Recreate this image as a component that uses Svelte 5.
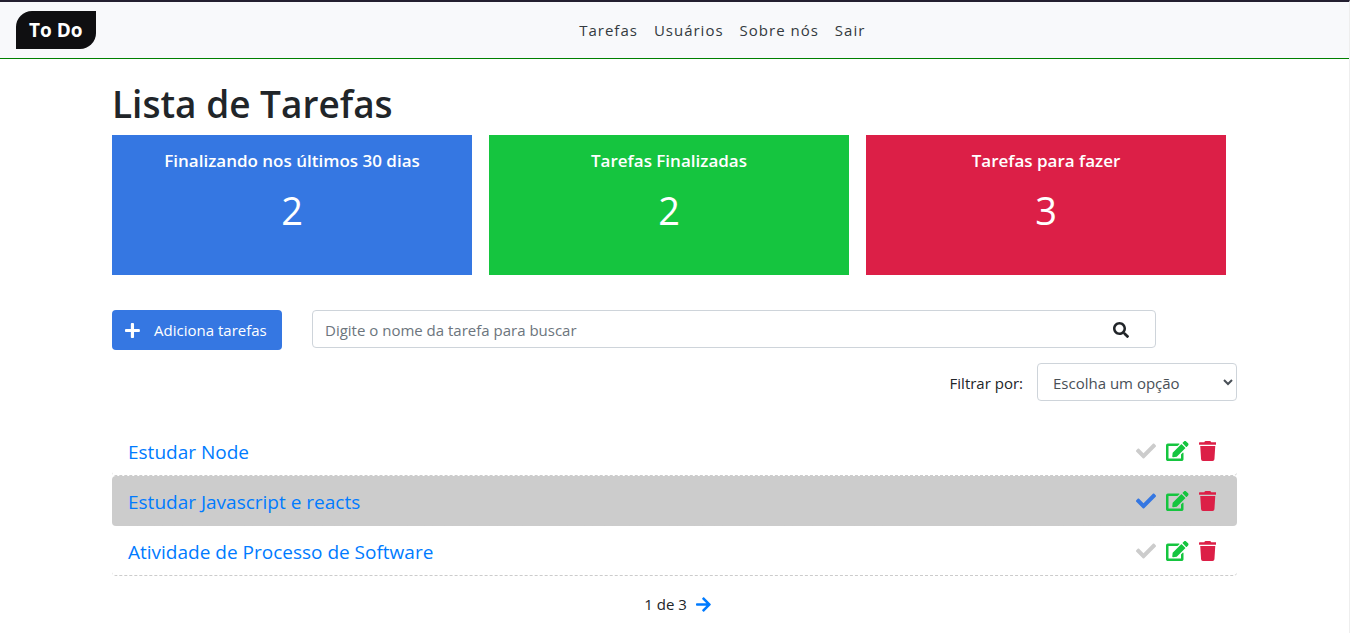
<script>
  const links = ['Tarefas', 'Usuários', 'Sobre nós', 'Sair'];

  const cards = [
    { title: 'Finalizando nos últimos 30 dias', total: 2, tone: 'blue' },
    { title: 'Tarefas Finalizadas', total: 2, tone: 'green' },
    { title: 'Tarefas para fazer', total: 3, tone: 'red' }
  ];

  let tasks = $state([
    { id: 1, title: 'Estudar Node', done: false },
    { id: 2, title: 'Estudar Javascript e reacts', done: true },
    { id: 3, title: 'Atividade de Processo de Software', done: false }
  ]);

  let search = $state('');
  let filter = $state('');

  const icons = {
    plus: { w: 448, d: 'M416 208H272V64c0-17.67-14.33-32-32-32h-32c-17.67 0-32 14.33-32 32v144H32c-17.67 0-32 14.33-32 32v32c0 17.67 14.33 32 32 32h144v144c0 17.67 14.33 32 32 32h32c17.67 0 32-14.33 32-32V304h144c17.67 0 32-14.33 32-32v-32c0-17.67-14.33-32-32-32z' },
    search: { w: 512, d: 'M505 442.7L405.3 343c-4.5-4.5-10.6-7-17-7H372c27.6-35.3 44-79.7 44-128C416 93.1 322.9 0 208 0S0 93.1 0 208s93.1 208 208 208c48.3 0 92.7-16.4 128-44v16.3c0 6.4 2.5 12.5 7 17l99.7 99.7c9.4 9.4 24.6 9.4 33.9 0l28.3-28.3c9.4-9.4 9.4-24.6.1-34zM208 336c-70.7 0-128-57.2-128-128 0-70.7 57.2-128 128-128 70.7 0 128 57.2 128 128 0 70.7-57.2 128-128 128z' },
    check: { w: 512, d: 'M173.898 439.404l-166.4-166.4c-9.997-9.997-9.997-26.206 0-36.204l36.203-36.204c9.997-9.998 26.207-9.998 36.204 0L192 312.69 432.095 72.596c9.997-9.997 26.207-9.997 36.204 0l36.203 36.204c9.997 9.997 9.997 26.206 0 36.204l-294.4 294.401c-9.998 9.997-26.207 9.997-36.204-.001z' },
    edit: { w: 576, d: 'M402.6 83.2l90.2 90.2c3.8 3.8 3.8 10 0 13.8L274.4 405.6l-92.8 10.3c-12.4 1.4-22.9-9.1-21.5-21.5l10.3-92.8L388.8 83.2c3.8-3.8 10-3.8 13.8 0zm162-22.9l-48.8-48.8c-15.2-15.2-39.9-15.2-55.2 0l-35.4 35.4c-3.8 3.8-3.8 10 0 13.8l90.2 90.2c3.8 3.8 10 3.8 13.8 0l35.4-35.4c15.2-15.3 15.2-40 0-55.2zM384 346.2V448H64V128h229.8c3.2 0 6.2-1.3 8.5-3.5l40-40c7.6-7.6 2.2-20.5-8.5-20.5H48C21.5 64 0 85.5 0 112v352c0 26.5 21.5 48 48 48h352c26.5 0 48-21.5 48-48V306.2c0-10.7-12.9-16-20.5-8.5l-40 40c-2.2 2.3-3.5 5.3-3.5 8.5z' },
    trash: { w: 448, d: 'M432 32H312l-9.4-18.7A24 24 0 0 0 281.1 0H166.8a23.72 23.72 0 0 0-21.4 13.3L136 32H16A16 16 0 0 0 0 48v32a16 16 0 0 0 16 16h416a16 16 0 0 0 16-16V48a16 16 0 0 0-16-16zM53.2 467a48 48 0 0 0 47.9 45h245.8a48 48 0 0 0 47.9-45L416 128H32z' },
    arrow: { w: 448, d: 'M190.5 66.9l22.2-22.2c9.4-9.4 24.6-9.4 33.9 0L441 239c9.4 9.4 9.4 24.6 0 33.9L246.6 467.3c-9.4 9.4-24.6 9.4-33.9 0l-22.2-22.2c-9.5-9.5-9.3-25 .4-34.3L311.4 296H24c-13.3 0-24-10.7-24-24v-32c0-13.3 10.7-24 24-24h287.4L190.9 101.2c-9.8-9.3-10-24.8-.4-34.3z' }
  };
</script>

{#snippet icon(name)}
  <svg class="icon" viewBox="0 0 {icons[name].w} 512" aria-hidden="true">
    <path fill="currentColor" d={icons[name].d} />
  </svg>
{/snippet}

<div class="page">
  <header>
    <a class="brand" href="#inicio">To Do</a>
    <nav>
      {#each links as link}
        <a href="#{link}">{link}</a>
      {/each}
    </nav>
  </header>

  <main>
    <h1>Lista de Tarefas</h1>

    <section class="cards">
      {#each cards as card}
        <article class={card.tone}>
          <h2>{card.title}</h2>
          <p>{card.total}</p>
        </article>
      {/each}
    </section>

    <div class="tools">
      <button class="add" type="button">{@render icon('plus')}<span>Adiciona tarefas</span></button>
      <form class="search" onsubmit={(e) => e.preventDefault()}>
        <input type="text" aria-label="Buscar tarefa" placeholder="Digite o nome da tarefa para buscar" bind:value={search} />
        <button type="submit" aria-label="Buscar">{@render icon('search')}</button>
      </form>
    </div>

    <div class="filter">
      <label for="filter">Filtrar por:</label>
      <select id="filter" bind:value={filter}>
        <option value="">Escolha um opção</option>
        <option value="done">Finalizadas</option>
        <option value="todo">Para fazer</option>
      </select>
    </div>

    <ul>
      {#each tasks as task (task.id)}
        <li class:done={task.done}>
          <a href="#tarefa-{task.id}">{task.title}</a>
          <div class="actions">
            <button class="check" type="button" aria-label="Finalizar" onclick={() => (task.done = !task.done)}>{@render icon('check')}</button>
            <button class="edit" type="button" aria-label="Editar">{@render icon('edit')}</button>
            <button class="trash" type="button" aria-label="Excluir">{@render icon('trash')}</button>
          </div>
        </li>
      {/each}
    </ul>

    <div class="pager">
      <span>1 de 3</span>
      <a href="#proxima" aria-label="Próxima página">{@render icon('arrow')}</a>
    </div>
  </main>
</div>

<style>
  :global(body) {
    background: #fff;
  }

  .page {
    box-sizing: border-box;
    min-height: 100vh;
    border-top: 2px solid #231f30;
    border-right: 1px solid #eee;
    color: #212529;
    font: 15px/24px 'Open Sans', 'Noto Sans', sans-serif;
  }

  .page *,
  .page *::before {
    box-sizing: border-box;
  }

  a {
    color: #007bff;
    text-decoration: none;
  }

  button,
  input,
  select {
    font: inherit;
    margin: 0;
  }

  button {
    border: 0;
    padding: 0;
    background: none;
    color: inherit;
    cursor: pointer;
  }

  .icon {
    display: block;
    height: 1em;
  }

  header {
    display: flex;
    align-items: center;
    gap: 16px;
    height: 57px;
    padding: 0 16px;
    background: #f8f9fb;
    border-bottom: 1px solid green;
  }

  .brand {
    padding: 4px 13px;
    border-radius: 16px 0;
    background: #0f0f11;
    color: #fff;
    font-size: 19px;
    font-weight: 700;
    line-height: 30px;
  }

  nav {
    flex: 1;
    display: flex;
    justify-content: center;
  }

  nav a {
    padding: 0 8px;
    color: #343a40;
    letter-spacing: 1px;
  }

  main {
    padding: 21px 112px 16px;
  }

  h1 {
    margin: 0 0 7px;
    font-size: 37px;
    font-weight: 600;
    line-height: 48px;
  }

  .cards {
    display: grid;
    grid-template-columns: repeat(3, 32%);
    gap: 17px;
  }

  article {
    min-height: 140px;
    padding: 14px;
    color: #fff;
    text-align: center;
  }

  article.blue {
    background: #3577e2;
  }

  article.green {
    background: #15c53f;
  }

  article.red {
    background: #dc1f47;
  }

  h2 {
    margin: 0 0 13px;
    font-size: 17px;
    font-weight: 600;
    line-height: 24px;
  }

  article p {
    margin: 0;
    font-size: 38px;
    line-height: 48px;
  }

  .tools {
    display: flex;
    align-items: flex-start;
    gap: 30px;
    margin-top: 35px;
  }

  .add {
    display: flex;
    align-items: center;
    justify-content: center;
    gap: 14px;
    width: 170px;
    height: 40px;
    padding-right: 2px;
    border-radius: 4px;
    background: #3577e2;
    color: #fff;
  }

  .add .icon {
    height: 17px;
  }

  .search {
    position: relative;
    width: 75%;
  }

  .search input {
    display: block;
    width: 100%;
    height: 38px;
    padding: 1px 56px 0 12px;
    border: 1px solid #ced4da;
    border-radius: 4px;
    color: #495057;
  }

  .search input::placeholder {
    color: #6c757d;
    opacity: 1;
  }

  .search button {
    position: absolute;
    top: 0;
    right: 15px;
    display: grid;
    place-items: center;
    width: 40px;
    height: 40px;
  }

  .search .icon {
    height: 16px;
  }

  .filter {
    display: flex;
    justify-content: flex-end;
    align-items: center;
    gap: 14px;
    margin-top: 13px;
  }

  .filter label {
    padding-top: 2px;
  }

  select {
    width: 200px;
    height: 38px;
    padding: 2px 0 0 11px;
    border: 1px solid #ced4da;
    border-radius: 4px;
    background: #fff;
    color: #495057;
  }

  ul {
    margin: 25px 0 0;
    padding: 0;
    list-style: none;
  }

  li {
    display: flex;
    align-items: center;
    justify-content: space-between;
    height: 50px;
    padding: 0 21px 0 16px;
    border-bottom: 1px dashed #ccc;
    border-radius: 4px;
    font-size: 19px;
  }

  li > a {
    padding-top: 2px;
  }

  li.done {
    background: #ccc;
  }

  .actions {
    display: flex;
    gap: 10px;
  }

  .actions .icon {
    height: 20px;
  }

  .check {
    color: #ccc;
  }

  .done .check {
    color: #3577e2;
  }

  .edit {
    color: #15c53f;
  }

  .trash {
    color: #dc1f47;
  }

  .pager {
    display: flex;
    justify-content: center;
    align-items: center;
    gap: 9px;
    margin-top: 16px;
    padding-left: 6px;
  }

  .pager .icon {
    height: 17px;
  }
</style>
